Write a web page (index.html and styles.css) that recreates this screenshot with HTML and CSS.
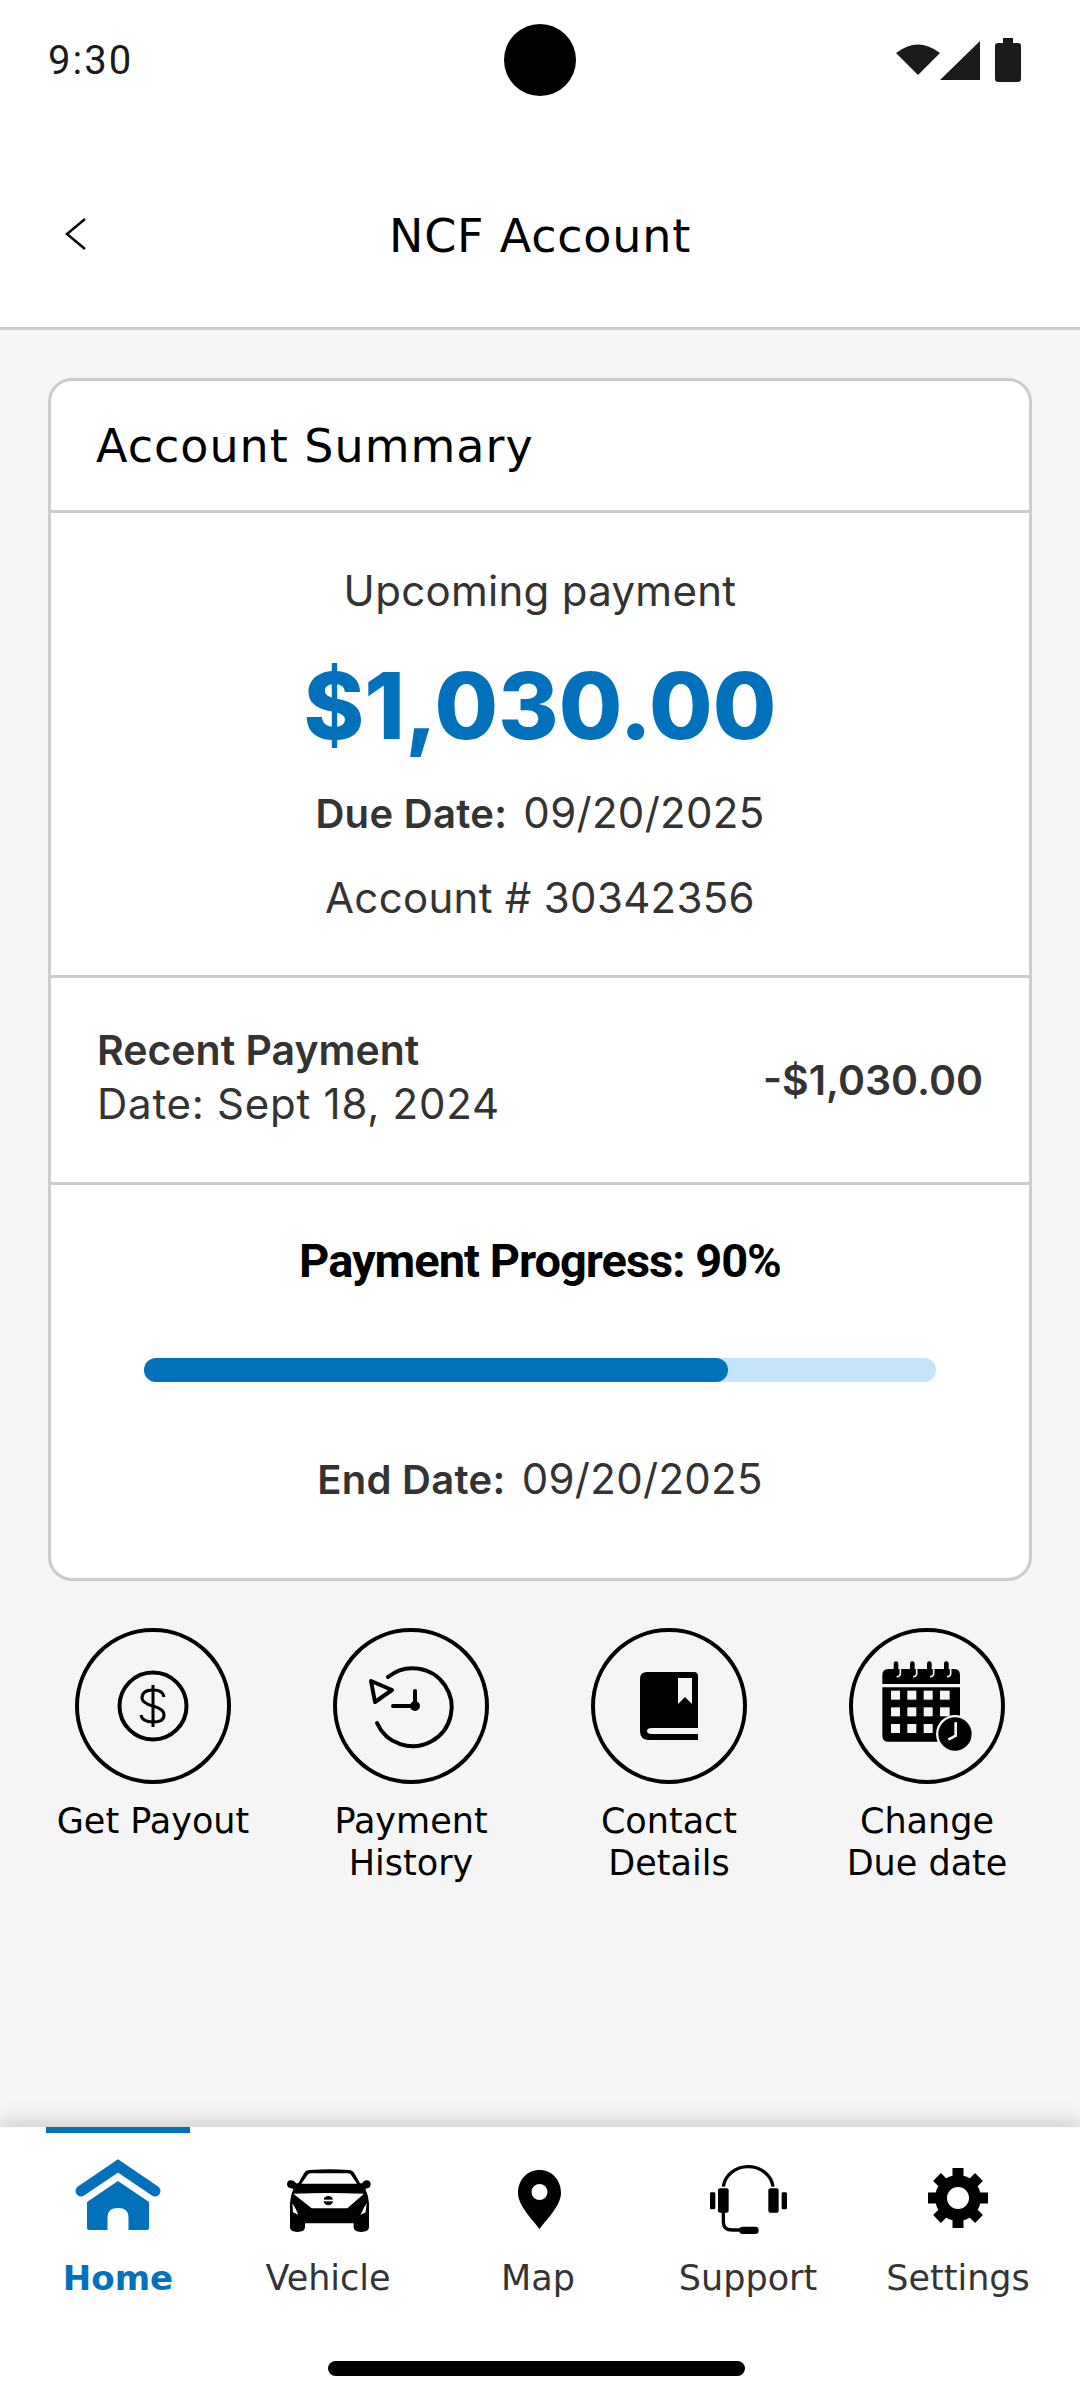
FILE: index.html
```html
<!DOCTYPE html>
<html lang="en">
<head>
  <meta charset="UTF-8" />
  <meta name="viewport" content="width=device-width, initial-scale=1" />
  <title>NCF Account</title>
  <link rel="stylesheet" href="styles.css">
</head>
<body>

<!-- Status bar -->
<div class="status-bar">
  <span class="status-time">9:30</span>
  <div class="camera"></div>
  <svg class="status-icons" width="136" height="48" viewBox="896 36 136 48">
    <path d="M896 53 Q918 36 940 53 L918 75 Z" fill="#1a1a1a" />
    <path d="M940 80 L980 41 V80 Z" fill="#1a1a1a" />
    <path d="M1003 38 H1013 V43 H1018 Q1021 43 1021 46 V79 Q1021 82 1018 82 H998 Q995 82 995 79 V46 Q995 43 998 43 H1003 Z" fill="#1a1a1a" />
  </svg>
</div>

<!-- Header -->
<div class="app-header">
  <svg class="back-icon" width="40" height="40" viewBox="0 0 40 40">
    <path d="M29 5 L11 20 L29 35" fill="none" stroke="#000" stroke-width="2.5" />
  </svg>
  <h1>NCF Account</h1>
  <span></span>
</div>

<div class="content">
  <!-- Account summary -->
  <div class="card">
    <h2 class="card-title">Account Summary</h2>

    <div class="summary">
      <p class="summary-label">Upcoming payment</p>
      <p class="amount">$1,030.00</p>
      <p class="due"><strong>Due Date:</strong> 09/20/2025</p>
      <p class="account-no">Account # 30342356</p>
    </div>

    <div class="recent">
      <div class="recent-info">
        <strong>Recent Payment</strong>
        <span>Date: Sept 18, 2024</span>
      </div>
      <strong class="recent-amount">-$1,030.00</strong>
    </div>

    <div class="progress-section">
      <p class="progress-title">Payment Progress: 90%</p>
      <div class="progress-track">
        <div class="progress-fill" style="width: 73.7%"></div>
      </div>
      <p class="end-date"><strong>End Date:</strong> 09/20/2025</p>
    </div>
  </div>

  <!-- Actions -->
  <div class="actions">
    <div class="action">
      <div class="action-circle">
        <svg width="100" height="100" viewBox="0 0 100 100" fill="none" stroke="#000" stroke-width="4">
          <circle cx="50" cy="50" r="33.5" />
          <path d="M61 41 Q60 34 50 34 Q39 34 39 42 Q39 47 50 50 Q61 53 61 59 Q61 66 50 66 Q39 66 38 59" stroke-width="3" />
          <path d="M50 29 V71" stroke-width="3" />
        </svg>
      </div>
      <span>Get Payout</span>
    </div>

    <div class="action">
      <div class="action-circle">
        <svg width="100" height="100" viewBox="0 0 100 100" fill="none" stroke="#000" stroke-width="4" stroke-linecap="round">
          <path d="M16 67 A39 39 0 1 0 27 21" />
          <path d="M10 25 L31 34 L14 46 Z" stroke-linejoin="round" fill="#f5f5f5" />
          <path d="M54 35 V50 H32" />
          <circle cx="54" cy="50" r="3" fill="#000" />
        </svg>
      </div>
      <span>Payment<br>History</span>
    </div>

    <div class="action">
      <div class="action-circle">
        <svg width="100" height="100" viewBox="0 0 100 100">
          <path d="M28 16 H75 Q79 16 79 20 V84 H30 Q21 84 21 75 V23 Q21 16 28 16 Z" fill="#000" />
          <path d="M59 22 H73 V48 L66 41 L59 48 Z" fill="#f5f5f5" />
          <path d="M33 72 H79 V78 H33 Q28 78 28 75 Q28 72 33 72 Z" fill="#f5f5f5" />
        </svg>
      </div>
      <span>Contact<br>Details</span>
    </div>

    <div class="action">
      <div class="action-circle">
        <svg width="110" height="110" viewBox="156 96 330 330">
          <path d="M205 150 H402 Q420 150 420 168 V195 H187 V168 Q187 150 205 150 Z" fill="#000" />
          <path d="M187 205 H420 V350 Q420 368 402 368 H205 Q187 368 187 350 Z" fill="#000" />
          <g fill="none" stroke="#f5f5f5" stroke-width="5">
            <path d="M241 150 V165 Q240 173 230 173" />
            <path d="M290 150 V165 Q289 173 279 173" />
            <path d="M341 150 V165 Q340 173 330 173" />
            <path d="M392 150 V165 Q391 173 381 173" />
          </g>
          <g fill="#000">
            <rect x="221" y="127" width="14" height="43" rx="7" />
            <rect x="270" y="127" width="14" height="43" rx="7" />
            <rect x="321" y="127" width="14" height="43" rx="7" />
            <rect x="372" y="127" width="14" height="43" rx="7" />
          </g>
          <g fill="#f5f5f5">
            <rect x="213" y="215" width="27" height="27" />
            <rect x="262" y="215" width="27" height="27" />
            <rect x="311" y="215" width="27" height="27" />
            <rect x="360" y="215" width="29" height="27" />
            <rect x="213" y="265" width="27" height="27" />
            <rect x="262" y="265" width="27" height="27" />
            <rect x="311" y="265" width="27" height="27" />
            <rect x="360" y="265" width="29" height="27" />
            <rect x="213" y="315" width="27" height="27" />
            <rect x="262" y="315" width="27" height="27" />
            <rect x="311" y="315" width="27" height="27" />
          </g>
          <circle cx="405" cy="345" r="57" fill="#f5f5f5" />
          <circle cx="405" cy="345" r="50" fill="#000" />
          <path d="M407 310 V350 L385 362" fill="none" stroke="#f5f5f5" stroke-width="8" />
        </svg>
      </div>
      <span>Change<br>Due date</span>
    </div>
  </div>
</div>

<!-- Tab bar -->
<div class="tab-bar">
  <div class="tabs">
    <div class="tab active">
      <div class="tab-marker"></div>
      <svg width="100" height="80" viewBox="-50 0 100 80">
        <g transform="translate(-41.5 2)" fill="#0171bc">
          <path d="M4.5 32 L41.5 7 L78.5 32" fill="none" stroke="#0171bc" stroke-width="11" stroke-linecap="round" />
          <path fill-rule="evenodd" d="M41.5 22 L72.5 43 V69 Q72.5 71 70.5 71 H12.5 Q10.5 71 10.5 69 V43 Z M31 71 H52 V58 Q52 49 41.5 49 Q31 49 31 58 Z" />
        </g>
      </svg>
      <span>Home</span>
    </div>

    <div class="tab">
      <div class="tab-marker"></div>
      <svg width="100" height="80" viewBox="-50 0 100 80">
        <g transform="translate(-68 -17) scale(.3333)">
          <path d="M115 130 L132 100 Q138 90 150 90 Q207 85 265 90 Q277 90 283 100 L300 130 L307 130 Q311 121 320 121 Q332 122 332 133 Q332 146 316 146 Q325 165 327 190 V262 Q327 276 303 276 Q281 276 281 262 V250 H135 V262 Q135 276 112 276 Q90 276 90 262 V190 Q92 165 100 146 Q82 146 81 133 Q81 122 92 121 Q103 121 108 130 Z" fill="#000" />
          <path d="M124 131 L143 104 Q147 100 154 100 H262 Q269 100 273 104 L291 131 Z" fill="#fff" />
          <path d="M100 161 Q207 157 312 161 L262 205 H155 Z" fill="#fff" />
          <path d="M97 190 Q107 205 115 224 L99 217 Z M320 190 Q310 205 302 224 L317 217 Z" fill="#fff" />
          <circle cx="205" cy="182" r="14" fill="#000" />
          <rect x="190" y="179" width="30" height="5" fill="#fff" />
        </g>
      </svg>
      <span>Vehicle</span>
    </div>

    <div class="tab">
      <div class="tab-marker"></div>
      <svg width="100" height="80" viewBox="-50 0 100 80">
        <g transform="translate(-20 13)">
          <path fill-rule="evenodd" d="M21.5 0 C34 0 43 10 43 23 C43 35 30 48 21.5 59 C13 48 0 35 0 23 C0 10 9 0 21.5 0 Z M21.5 14 A8 8 0 1 0 21.5 30 A8 8 0 1 0 21.5 14 Z" fill="#000" />
        </g>
      </svg>
      <span>Map</span>
    </div>

    <div class="tab">
      <div class="tab-marker"></div>
      <svg width="100" height="80" viewBox="-50 0 100 80">
        <g transform="translate(-68 -17) scale(.3333)">
          <path d="M130 140 A75 68 0 0 1 279 140" fill="none" stroke="#000" stroke-width="10" />
          <rect x="114" y="145" width="32" height="73" rx="6" fill="#000" />
          <rect x="265" y="145" width="31" height="73" rx="6" fill="#000" />
          <rect x="90" y="157" width="16" height="51" rx="4" fill="#000" />
          <rect x="305" y="157" width="16" height="51" rx="4" fill="#000" />
          <path d="M130 216 V245 Q130 270 158 270 H190" fill="none" stroke="#000" stroke-width="10" />
          <rect x="178" y="260" width="58" height="22" rx="10" fill="#000" />
        </g>
      </svg>
      <span>Support</span>
    </div>

    <div class="tab">
      <div class="tab-marker"></div>
      <svg width="100" height="80" viewBox="-50 0 100 80">
        <g transform="translate(0 41)">
          <g stroke="#000" stroke-width="11">
            <path d="M0 -30 V30" />
            <path d="M-30 0 H30" />
            <path d="M-21 -21 L21 21" />
            <path d="M-21 21 L21 -21" />
          </g>
          <circle r="23" fill="#000" />
          <circle r="11" fill="#fff" />
        </g>
      </svg>
      <span>Settings</span>
    </div>
  </div>
  <div class="home-indicator"></div>
</div>

</body>
</html>
```

FILE: styles.css
```css
* {
  box-sizing: border-box;
}

body {
  font-family: 'Inter', 'Liberation Sans', sans-serif;
  background: #f5f5f5;
  margin: 0;
  width: 1080px;
  height: 2400px;
  display: flex;
  flex-direction: column;
  color: #333;
}

p, h1, h2 {
  margin: 0;
}

/* Status bar */
.status-bar {
  height: 120px;
  background: #fff;
  padding: 0 48px;
  display: grid;
  grid-template-columns: 1fr auto 1fr;
  align-items: center;
}

.status-time {
  font-family: 'Roboto', sans-serif;
  font-size: 40px;
  letter-spacing: 2px;
  color: #1a1a1a;
}

.camera {
  width: 72px;
  height: 72px;
  border-radius: 50%;
  background: #000;
}

.status-icons {
  justify-self: end;
}

/* Header */
.app-header {
  height: 210px;
  background: #fff;
  border-bottom: 3px solid #ccc;
  padding: 24px 56px 0;
  display: grid;
  grid-template-columns: 1fr auto 1fr;
  align-items: center;
}

.back-icon {
  margin-bottom: 4px;
}

.app-header h1 {
  font-family: 'DejaVu Sans', sans-serif;
  font-size: 46px;
  font-weight: 400;
  letter-spacing: 0.8px;
  color: #000;
}

/* Card */
.content {
  flex: 1;
  padding: 48px 48px 0;
}

.card {
  background: #fff;
  border: 3px solid #ccc;
  border-radius: 24px;
}

.card-title {
  height: 132px;
  padding-left: 45px;
  border-bottom: 3px solid #ccc;
  display: flex;
  align-items: center;
  font-family: 'DejaVu Sans', sans-serif;
  font-size: 46px;
  font-weight: 400;
  letter-spacing: 1px;
  color: #000;
}

.summary {
  padding: 53px 0 52px;
  border-bottom: 3px solid #ccc;
  text-align: center;
}

.summary-label,
.due,
.account-no,
.end-date {
  font-size: 42px;
  line-height: 50px;
  letter-spacing: 0.3px;
}

.amount {
  margin-top: 40px;
  font-size: 92px;
  line-height: 100px;
  font-weight: 800;
  color: #0171bc;
}

.due {
  margin-top: 32px;
}

.due strong,
.end-date strong {
  font-size: 40px;
  font-weight: 600;
  margin-right: 4px;
}

.account-no {
  margin-top: 34px;
}

.recent {
  height: 207px;
  padding: 0 46px;
  border-bottom: 3px solid #ccc;
  display: flex;
  justify-content: space-between;
  align-items: center;
  font-size: 40px;
  line-height: 54px;
}

.recent-info {
  display: flex;
  flex-direction: column;
  margin-bottom: 6px;
}

.recent-info span {
  font-size: 42px;
  letter-spacing: 0.75px;
}

.recent-info strong,
.recent-amount {
  font-size: 41px;
  font-weight: 600;
}

.progress-section {
  padding: 48px 93px 73px;
  text-align: center;
}

.progress-title {
  font-family: 'Roboto', sans-serif;
  font-size: 47px;
  line-height: 56px;
  font-weight: 700;
  letter-spacing: -1px;
  color: #000;
}

.progress-track {
  margin-top: 69px;
  height: 24px;
  border-radius: 12px;
  background: #c3e4fb;
}

.progress-fill {
  height: 100%;
  border-radius: 12px;
  background: #0171bc;
}

.end-date {
  margin-top: 72px;
}

/* Actions */
.actions {
  margin: 47px -24px 0;
  display: grid;
  grid-template-columns: repeat(4, 258px);
}

.action {
  display: flex;
  flex-direction: column;
  align-items: center;
  text-align: center;
  font-family: 'DejaVu Sans', sans-serif;
  font-size: 35px;
  line-height: 42px;
  color: #000;
}

.action span {
  margin-top: 16px;
}

.action-circle {
  width: 156px;
  height: 156px;
  border: 4px solid #000;
  border-radius: 50%;
  display: flex;
  justify-content: center;
  align-items: center;
}

/* Tab bar */
.tab-bar {
  height: 273px;
  background: #fff;
  box-shadow: 0 -4px 22px rgba(0, 0, 0, 0.18);
}

.tabs {
  padding: 0 13px;
  display: flex;
}

.tab {
  width: 210px;
  display: flex;
  flex-direction: column;
  align-items: center;
  font-family: 'DejaVu Sans', sans-serif;
  font-size: 35px;
  line-height: 40px;
  color: #333;
}

.tab-marker {
  width: 144px;
  height: 6px;
  margin-bottom: 24px;
}

.tab span {
  margin-top: 21px;
}

.tab.active {
  color: #0171bc;
  font-size: 34px;
  font-weight: 700;
}

.tab.active .tab-marker {
  background: #0171bc;
}

.home-indicator {
  width: 417px;
  height: 15px;
  margin: 63px 0 0 328px;
  border-radius: 8px;
  background: #000;
}
```
